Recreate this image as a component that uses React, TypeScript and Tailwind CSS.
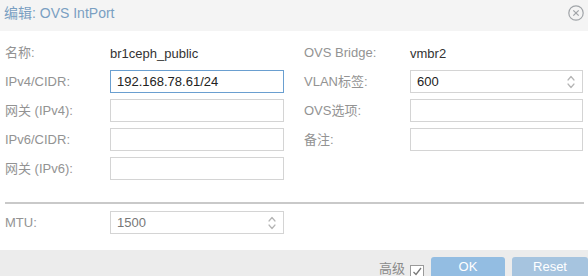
const FONT = { fontFamily: '"Liberation Sans", Arial, "Noto Sans CJK SC", sans-serif' }

function Spinner() {
  return (
    <svg width="10" height="16" viewBox="0 0 10 16" fill="none" stroke="#b5b5b5" strokeWidth="1.2" strokeLinecap="round" strokeLinejoin="round">
      <polyline points="2,6 5,2.5 8,6" />
      <polyline points="2,10 5,13.5 8,10" />
    </svg>
  )
}

function Field({ value, focused, spin, muted }: { value?: string; focused?: boolean; spin?: boolean; muted?: boolean }) {
  return (
    <div
      className={`flex h-[23px] items-center justify-between border bg-white pl-[6px] pr-[6px] text-[13px] ${
        focused ? "border-[#6a9fd0]" : "border-[#d4d4d4]"
      } ${muted ? "text-[#777]" : "text-[#222]"}`}
    >
      <span>{value}</span>
      {spin && <Spinner />}
    </div>
  )
}

function Row({ label, children, labelW }: { label: string; children: React.ReactNode; labelW: string }) {
  return (
    <div className="flex h-[23px] items-center">
      <div className={`${labelW} shrink-0 text-[13px] text-[#939393]`}>{label}</div>
      <div className="flex-1">{children}</div>
    </div>
  )
}

export default function App() {
  return (
    <div className="flex h-[276px] w-[588px] flex-col overflow-hidden bg-white" style={FONT}>
      <header className="flex h-[31px] shrink-0 items-start justify-between bg-[#f4f4f4] pl-[4px] pr-[3px] pt-[3px]">
        <span className="text-[14px] text-[#7a9fc2]">编辑: OVS IntPort</span>
        <svg width="18" height="18" viewBox="0 0 18 18" fill="none" stroke="#a0a4a8" strokeWidth="1.2" className="mt-[1px]">
          <circle cx="9" cy="9" r="7.2" />
          <line x1="6.3" y1="6.3" x2="11.7" y2="11.7" />
          <line x1="11.7" y1="6.3" x2="6.3" y2="11.7" />
        </svg>
      </header>

      <div className="flex flex-1 flex-col pl-[5px] pr-[5px] pt-[10px]">
        <div className="flex">
          <div className="flex w-[279px] flex-col gap-[6px]">
            <Row label="名称:" labelW="w-[105px]">
              <span className="text-[13px] text-[#333]">br1ceph_public</span>
            </Row>
            <Row label="IPv4/CIDR:" labelW="w-[105px]">
              <Field value="192.168.78.61/24" focused />
            </Row>
            <Row label="网关 (IPv4):" labelW="w-[105px]">
              <Field />
            </Row>
            <Row label="IPv6/CIDR:" labelW="w-[105px]">
              <Field />
            </Row>
            <Row label="网关 (IPv6):" labelW="w-[105px]">
              <Field />
            </Row>
          </div>
          <div className="ml-[20px] flex w-[279px] flex-col gap-[6px]">
            <Row label="OVS Bridge:" labelW="w-[106px]">
              <span className="text-[13px] text-[#333]">vmbr2</span>
            </Row>
            <Row label="VLAN标签:" labelW="w-[106px]">
              <Field value="600" spin />
            </Row>
            <Row label="OVS选项:" labelW="w-[106px]">
              <Field />
            </Row>
            <Row label="备注:" labelW="w-[106px]">
              <Field />
            </Row>
          </div>
        </div>

        <div className="mt-[22px] h-[2px] w-[579px] bg-[#c9c9c9]" />

        <div className="mt-[7px] w-[279px]">
          <Row label="MTU:" labelW="w-[105px]">
            <Field value="1500" spin muted />
          </Row>
        </div>
      </div>

      <footer className="flex h-[26px] shrink-0 items-start justify-end bg-[#ececec] pt-[7px]">
        <span className="mt-[4px] text-[13px] leading-[16px] text-[#8a8a8a]">高级</span>
        <span className="ml-[5px] mt-[8px] flex h-[14px] w-[14px] items-center justify-center border border-[#9a9a9a] bg-white">
          <svg width="10" height="10" viewBox="0 0 10 10" fill="none" stroke="#777" strokeWidth="1.3">
            <polyline points="1.5,5 4,7.5 9,1" />
          </svg>
        </span>
        <button className="ml-[7px] h-[24px] w-[74px] rounded-[3px] bg-[#93bde2] pb-[4px] text-[13px] text-white">OK</button>
        <button className="ml-[7px] h-[24px] w-[76px] rounded-[3px] bg-[#a6c4df] pb-[4px] text-[13px] text-white">Reset</button>
      </footer>
    </div>
  )
}
